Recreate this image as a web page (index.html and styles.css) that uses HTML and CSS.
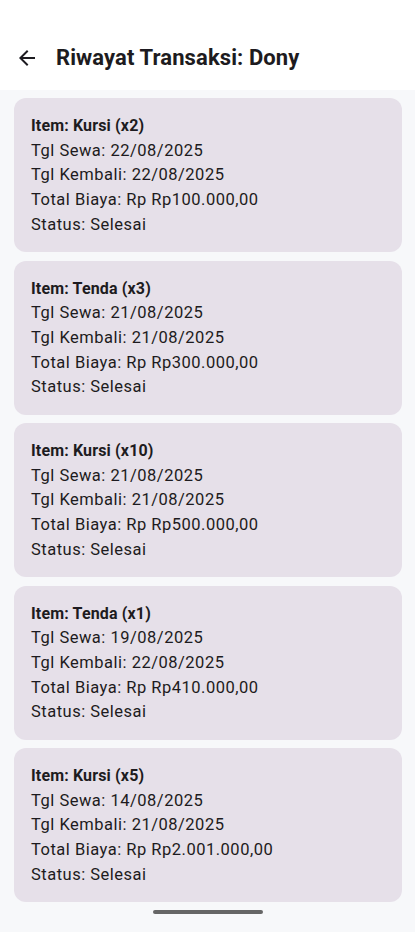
FILE: index.html
```html
<!DOCTYPE html>
<html lang="id">
<head>
<meta charset="utf-8">
<title>Riwayat Transaksi</title>
<link rel="stylesheet" href="styles.css">
</head>
<body>
<div class="screen">
  <header class="appbar">
    <button class="back" aria-label="Kembali">
      <svg width="24" height="24" viewBox="0 0 24 24"><path d="M20 11H7.83l5.59-5.59L12 4l-8 8 8 8 1.41-1.41L7.83 13H20v-2z" fill="#1d1b20"/></svg>
    </button>
    <h1 class="title">Riwayat Transaksi: Dony</h1>
  </header>
  <main class="list">
    <div class="card">
      <p class="item">Item: Kursi (x2)</p>
      <p class="line">Tgl Sewa: 22/08/2025</p>
      <p class="line">Tgl Kembali: 22/08/2025</p>
      <p class="line">Total Biaya: Rp Rp100.000,00</p>
      <p class="line">Status: Selesai</p>
    </div>
    <div class="card">
      <p class="item">Item: Tenda (x3)</p>
      <p class="line">Tgl Sewa: 21/08/2025</p>
      <p class="line">Tgl Kembali: 21/08/2025</p>
      <p class="line">Total Biaya: Rp Rp300.000,00</p>
      <p class="line">Status: Selesai</p>
    </div>
    <div class="card">
      <p class="item">Item: Kursi (x10)</p>
      <p class="line">Tgl Sewa: 21/08/2025</p>
      <p class="line">Tgl Kembali: 21/08/2025</p>
      <p class="line">Total Biaya: Rp Rp500.000,00</p>
      <p class="line">Status: Selesai</p>
    </div>
    <div class="card">
      <p class="item">Item: Tenda (x1)</p>
      <p class="line">Tgl Sewa: 19/08/2025</p>
      <p class="line">Tgl Kembali: 22/08/2025</p>
      <p class="line">Total Biaya: Rp Rp410.000,00</p>
      <p class="line">Status: Selesai</p>
    </div>
    <div class="card">
      <p class="item">Item: Kursi (x5)</p>
      <p class="line">Tgl Sewa: 14/08/2025</p>
      <p class="line">Tgl Kembali: 21/08/2025</p>
      <p class="line">Total Biaya: Rp Rp2.001.000,00</p>
      <p class="line">Status: Selesai</p>
    </div>
  </main>
  <div class="navbar"><span class="handle"></span></div>
</div>
</body>
</html>
```
FILE: styles.css
```css
* { box-sizing: border-box; }
html, body { margin: 0; padding: 0; }
body {
  font-family: Roboto, "Noto Sans", sans-serif;
  background: #f7f8fa;
  color: #1d1b20;
}
.screen {
  width: 415px;
  height: 932px;
  display: flex;
  flex-direction: column;
  background: #f7f8fa;
}
.appbar {
  height: 90px;
  padding-top: 25px;
  background: #ffffff;
  display: flex;
  align-items: center;
  padding-left: 15px;
}
.back {
  width: 24px;
  height: 24px;
  padding: 0;
  border: 0;
  background: none;
  display: flex;
  align-items: center;
  justify-content: center;
}
.title {
  margin: 0 0 0 17px;
  font-size: 22px;
  font-weight: 700;
  color: #1d1b20;
  letter-spacing: 0.1px;
}
.list {
  flex: 1;
  padding: 8px 13px 0 14px;
  display: flex;
  flex-direction: column;
  gap: 8.5px;
}
.card {
  background: #e6e0e9;
  border-radius: 12px;
  height: 154px;
  padding: 15px 17px 0;
}
.card p {
  margin: 0;
  font-size: 16.5px;
  line-height: 24.75px;
  letter-spacing: 0.5px;
}
.card .item {
  font-weight: 700;
  font-size: 16px;
  line-height: 25.5px;
  letter-spacing: 0.15px;
}
.navbar {
  height: 22px;
  display: flex;
  justify-content: center;
  align-items: flex-start;
}
.handle {
  width: 110px;
  height: 4px;
  border-radius: 2px;
  background: #666666;
}
```
